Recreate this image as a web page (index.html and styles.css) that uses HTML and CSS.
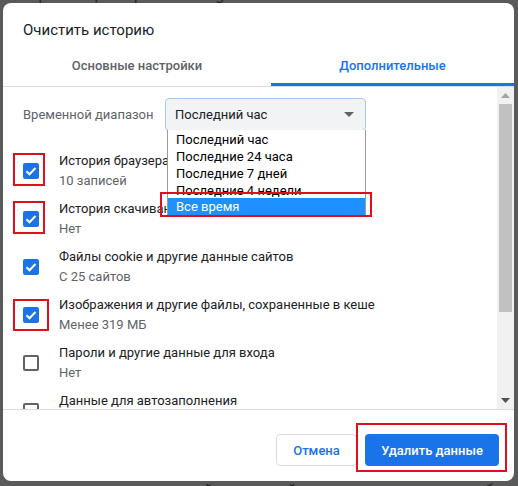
FILE: index.html
```html
<!DOCTYPE html>
<html lang="ru">
<head>
<meta charset="utf-8">
<link rel="stylesheet" href="styles.css">
</head>
<body>
<div class="page">
  <p class="page-line top">Синхронизация сервисов Google</p>
  <p class="page-line bottom">какие данные отправлять сайтам и какой контент показывать на веб-страницах</p>
</div>

<div class="dialog">
  <div class="title">Очистить историю</div>
  <div class="tabs">
    <div class="tab basic">Основные настройки</div>
    <div class="tab active">Дополнительные</div>
  </div>

  <div class="body">
    <div class="content">
      <div class="range-row">
        <span class="range-label">Временной диапазон</span>
        <div class="select">
          <span>Последний час</span>
          <svg class="arrow" width="10" height="5" viewBox="0 0 10 5"><path d="M0 0h10L5 5z" fill="#5f6368"/></svg>
          <div class="options">
            <div class="opt">Последний час</div>
            <div class="opt">Последние 24 часа</div>
            <div class="opt">Последние 7 дней</div>
            <div class="opt">Последние 4 недели</div>
            <div class="opt sel">Все время</div>
            <div class="mark opt-mark"></div>
          </div>
        </div>
      </div>

      <div class="row">
        <div class="cb on"><svg viewBox="0 0 16 16"><path d="M3.5 8.2l3 3 6-6.2" fill="none" stroke="#fff" stroke-width="2"/></svg><div class="mark"></div></div>
        <div class="txt"><div class="l1">История браузера</div><div class="l2">10 записей</div></div>
      </div>
      <div class="row">
        <div class="cb on"><svg viewBox="0 0 16 16"><path d="M3.5 8.2l3 3 6-6.2" fill="none" stroke="#fff" stroke-width="2"/></svg><div class="mark"></div></div>
        <div class="txt"><div class="l1">История скачиваний</div><div class="l2">Нет</div></div>
      </div>
      <div class="row">
        <div class="cb on"><svg viewBox="0 0 16 16"><path d="M3.5 8.2l3 3 6-6.2" fill="none" stroke="#fff" stroke-width="2"/></svg></div>
        <div class="txt"><div class="l1">Файлы cookie и другие данные сайтов</div><div class="l2">С 25 сайтов</div></div>
      </div>
      <div class="row">
        <div class="cb on"><svg viewBox="0 0 16 16"><path d="M3.5 8.2l3 3 6-6.2" fill="none" stroke="#fff" stroke-width="2"/></svg><div class="mark wide"></div></div>
        <div class="txt"><div class="l1">Изображения и другие файлы, сохраненные в кеше</div><div class="l2">Менее 319 МБ</div></div>
      </div>
      <div class="row">
        <div class="cb off"></div>
        <div class="txt"><div class="l1">Пароли и другие данные для входа</div><div class="l2">Нет</div></div>
      </div>
      <div class="row">
        <div class="cb off"></div>
        <div class="txt"><div class="l1">Данные для автозаполнения</div><div class="l2">&nbsp;</div></div>
      </div>
    </div>
    <div class="scrollbar">
      <div class="sb-btn"><svg width="9" height="5" viewBox="0 0 9 5"><path d="M0 5L4.5 0 9 5z" fill="#a3a3a3"/></svg></div>
      <div class="sb-track"><div class="sb-thumb"></div></div>
      <div class="sb-btn"><svg width="9" height="5" viewBox="0 0 9 5"><path d="M0 0h9L4.5 5z" fill="#505050"/></svg></div>
    </div>
  </div>

  <div class="footer">
    <button class="btn cancel">Отмена</button>
    <button class="btn primary">Удалить данные<span class="mark btn-mark"></span></button>
  </div>
</div>
</body>
</html>
```

FILE: styles.css
```css
html, body {
  margin: 0;
  padding: 0;
}
body {
  width: 518px;
  height: 486px;
  background: #5a5a5a;
  font-family: Roboto, "Noto Sans", sans-serif;
  overflow: hidden;
  position: relative;
}
.page {
  display: flex;
  flex-direction: column;
  justify-content: space-between;
  height: 486px;
  overflow: hidden;
}
.page-line {
  margin: 0;
  width: 518px;
  overflow: hidden;
  font-size: 15px;
  line-height: 18px;
  color: #1f1f1f;
  white-space: nowrap;
}
.page-line.top {
  margin-top: -14px;
  padding-left: 4px;
  box-sizing: border-box;
}
.page-line.bottom {
  margin-bottom: -13px;
}

.dialog {
  position: absolute;
  left: 3px;
  top: 3px;
  width: 511px;
  height: 478px;
  background: #fff;
  border-radius: 8px;
  overflow: hidden;
  display: flex;
  flex-direction: column;
}
.title {
  padding: 17px 20px 0;
  height: 20px;
  line-height: 20px;
  font-size: 15px;
  color: #202124;
}
.tabs {
  display: flex;
  border-bottom: 1px solid #dadce0;
}
.tab {
  padding: 17px 0 8px;
  line-height: 18px;
  font-size: 13px;
  font-weight: 500;
  text-align: center;
  color: #5f6368;
  border-bottom: 3px solid transparent;
}
.tab.basic { width: 268px; }
.tab.active {
  flex: 1;
  color: #1a73e8;
  border-bottom-color: #1a73e8;
}

.body {
  height: 322px;
  display: flex;
  border-bottom: 1px solid #dadce0;
}
.content {
  flex: 1;
  padding: 11px 0 0 20px;
  overflow: hidden;
}
.range-row {
  display: flex;
  align-items: center;
  height: 32px;
  margin-bottom: 17px;
}
.range-label {
  width: 142px;
  font-size: 13px;
  color: #5f6368;
}
.select {
  position: relative;
  box-sizing: border-box;
  width: 201px;
  height: 33px;
  margin-top: 1px;
  background: #f1f3f4;
  border: 1px solid #a8c7fa;
  border-radius: 4px;
  display: flex;
  align-items: center;
  justify-content: space-between;
  padding: 0 8px 0 9px;
  font-size: 13px;
  color: #202124;
}
.arrow { margin-right: 3px; }
.options {
  position: absolute;
  left: 1px;
  top: 31px;
  width: 197px;
  background: #fff;
  border: 1px solid #9a9a9a;
  border-top: none;
  padding-top: 1px;
  z-index: 2;
}
.opt {
  height: 17px;
  line-height: 17px;
  padding-left: 8px;
  font-size: 13px;
  color: #000;
  white-space: nowrap;
}
.opt.sel {
  height: 18px;
  line-height: 18px;
  margin-top: -1px;
  background: #1e90ff;
  color: #fff;
}

.row {
  display: flex;
  align-items: center;
  height: 48px;
}
.cb {
  position: relative;
  box-sizing: border-box;
  width: 16px;
  height: 16px;
  border-radius: 2px;
  margin-right: 20px;
  flex: none;
}
.cb.on { background: #1a73e8; }
.cb.on svg { display: block; width: 16px; height: 16px; }
.cb.off { border: 2px solid #5f6368; }
.txt { font-size: 13px; }
.l1 { line-height: 20px; color: #202124; white-space: nowrap; }
.l2 { line-height: 20px; color: #5f6368; }

.mark {
  position: absolute;
  box-sizing: border-box;
  border: 2px solid #e0101a;
  left: -10px;
  top: -10px;
  width: 32px;
  height: 33px;
}
.mark.wide { width: 36px; top: -8px; height: 32px; }
.opt-mark {
  left: -8px;
  top: 62px;
  width: 212px;
  height: 25px;
}

.scrollbar {
  width: 17px;
  background: #f1f1f1;
  display: flex;
  flex-direction: column;
}
.sb-btn {
  height: 17px;
  display: flex;
  align-items: center;
  justify-content: center;
}
.sb-track { flex: 1; }
.sb-thumb {
  height: 208px;
  margin: 0 2px;
  background: #c1c1c1;
}

.footer {
  flex: 1;
  display: flex;
  justify-content: flex-end;
  align-items: flex-start;
  padding: 24px 15px 0 0;
  gap: 8px;
}
.btn {
  position: relative;
  height: 32px;
  border-radius: 4px;
  font-family: Roboto, "Noto Sans", sans-serif;
  font-size: 13px;
  font-weight: 500;
  padding: 0 16px;
  cursor: pointer;
}
.cancel {
  width: 81px;
  background: #fff;
  color: #1a73e8;
  border: 1px solid #dadce0;
}
.primary {
  width: 134px;
  background: #1a73e8;
  color: #fff;
  border: none;
}
.btn-mark {
  left: -9px;
  top: -11px;
  width: 151px;
  height: 49px;
}
```
